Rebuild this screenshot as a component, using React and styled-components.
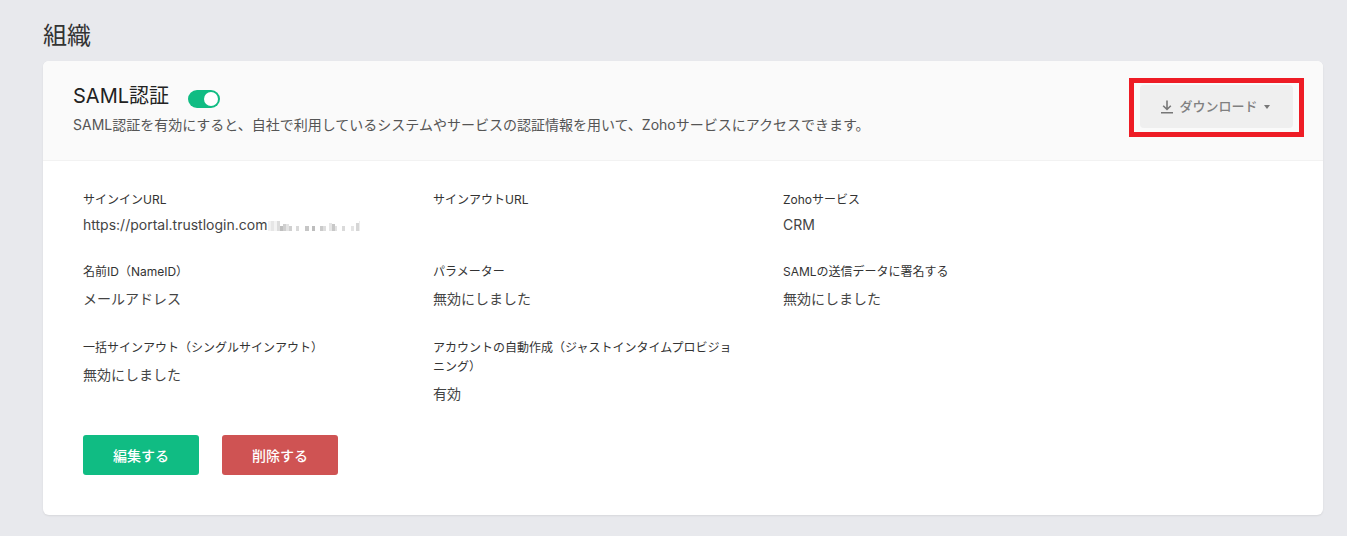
import React from 'react';
import styled, { createGlobalStyle } from 'styled-components';

const Global = createGlobalStyle`
html,body{
    margin:0;
    padding:0;
    background:#e8e9ed;
    font-family:Inter,"Noto Sans CJK JP",sans-serif;
    color:#333;
}
`;
const Page = styled.div`
padding:19px 24px 20px 43px;
height:536px;
box-sizing:border-box;
overflow:hidden;
`;
const Title = styled.h1`
margin:0 0 8px;
font-size:24px;
font-weight:400;
line-height:34px;
color:#333;
`;
const Card = styled.div`
background:#fff;
border-radius:6px;
box-shadow:0 1px 2px rgba(0,0,0,.08);
height:454px;
overflow:hidden;
`;
const Header = styled.div`
position:relative;
height:100px;
box-sizing:border-box;
background:#fafafa;
border-bottom:1px solid #f2f2f2;
padding:21px 30px 0;
display:flex;
justify-content:space-between;
`;
const HeadRow = styled.div`
display:flex;
align-items:center;
height:28px;
`;
const SamlTitle = styled.span`
font-size:20px;
line-height:28px;
color:#222;
`;
const Toggle = styled.span`
display:block;
width:32px;
height:18px;
margin:6px 0 0 19px;
border-radius:9px;
background:#10bc83;
position:relative;
&::after{
    content:'';
    position:absolute;
    top:2px;
    right:2px;
    width:14px;
    height:14px;
    border-radius:50%;
    background:#fff;
}
`;
const Desc = styled.p`
margin:5px 0 0;
font-size:14px;
line-height:20px;
color:#555;
`;
const Download = styled.button`
width:153px;
height:43px;
margin:3px 0 0;
border:0;
border-radius:4px;
background:#efefef;
color:#808080;
font:inherit;
font-size:13px;
font-weight:500;
display:flex;
justify-content:center;
align-items:center;
gap:5px;
padding:0 3px 2px 0;
`;
const Caret = styled.span`
width:0;
height:0;
border-left:3.5px solid transparent;
border-right:3.5px solid transparent;
border-top:4px solid #777;
margin:2px 0 0 1px;
`;
const RedFrame = styled.div`
position:absolute;
top:17px;
right:19px;
width:175px;
height:59px;
border:5px solid #ee1c25;
box-sizing:border-box;
`;
const Body = styled.div`
padding:29px 40px 0;
`;
const Grid = styled.div`
display:grid;
grid-template-columns:repeat(3,350px);
`;
const Field = styled.div`
min-height:${p => p.$h}px;
padding-right:46px;
`;
const Label = styled.div`
font-size:12px;
line-height:19px;
color:#333;
`;
const Value = styled.div`
margin-top:${p => p.$gap}px;
font-size:14px;
line-height:20px;
color:#444;
display:flex;
align-items:center;
min-height:20px;
`;
const Actions = styled.div`
display:flex;
gap:23px;
margin-top:11px;
`;
const Btn = styled.button`
width:116px;
height:40px;
border:0;
border-radius:3px;
background:${p => p.$bg};
color:#fff;
font:inherit;
font-size:14px;
font-weight:500;
padding:0;
`;

// mosaic over the hidden part of the url: [x, y, w, h, colour]
const blurBlocks = [
    [0, 0, 3, 10, '#f1f1f1'], [3, 0, 3, 10, '#e6e6e6'], [6, 0, 3, 10, '#f3f3f3'],
    [9, 0, 3, 10, '#dcdcdc'], [12, 5, 3, 5, '#bfbfbf'], [15, 3, 3, 7, '#cfcfcf'],
    [18, 3, 3, 7, '#e4e4e4'], [21, 5, 3, 5, '#d0d0d0'], [28, 5, 3, 5, '#d9d9d9'],
    [37, 5, 4, 5, '#c6c6c6'], [44, 5, 3, 5, '#bdbdbd'], [52, 5, 3, 5, '#cbcbcb'],
    [55, 5, 3, 5, '#dedede'], [61, 2, 3, 8, '#e6e6e6'], [64, 3, 3, 7, '#c8c8c8'],
    [67, 5, 2, 5, '#e2e2e2'], [74, 5, 3, 5, '#dadada'], [83, 5, 3, 5, '#e4e4e4'],
    [88, 2, 3, 8, '#d6d6d6'], [91, 0, 1, 10, '#ececec'],
];

const BlurredPath = () => (
    <svg width="92" height="10" style={{ marginLeft: 1, marginTop: 1 }}>
        {blurBlocks.map(([x, y, w, h, c]) => <rect key={x} x={x} y={y} width={w} height={h} fill={c} />)}
    </svg>
);

const DownloadIcon = () => (
    <svg width="14" height="15" viewBox="0 0 14 15" fill="none" stroke="#777" strokeWidth="1.6" style={{ marginTop: 2 }}>
        <path d="M7 1.5v8.5M3.2 6.8L7 10.5L10.8 6.8M1 13.7h12" />
    </svg>
);

const fields = [
    { label: 'サインインURL', value: <>https://portal.trustlogin.com<BlurredPath /></>, h: 72, gap: 6 },
    { label: 'サインアウトURL', value: '', h: 72, gap: 6 },
    { label: 'Zohoサービス', value: 'CRM', h: 72, gap: 6 },
    { label: '名前ID（NameID）', value: 'メールアドレス', h: 76, gap: 8 },
    { label: 'パラメーター', value: '無効にしました', h: 76, gap: 8 },
    { label: 'SAMLの送信データに署名する', value: '無効にしました', h: 76, gap: 8 },
    { label: '一括サインアウト（シングルサインアウト）', value: '無効にしました', h: 86, gap: 8 },
    { label: 'アカウントの自動作成（ジャストインタイムプロビジョニング）', value: '有効', h: 86, gap: 8 },
];

export default function App() {
    return (
        <Page>
            <Global />
            <Title>組織</Title>
            <Card>
                <Header>
                    <div>
                        <HeadRow>
                            <SamlTitle>SAML認証</SamlTitle>
                            <Toggle />
                        </HeadRow>
                        <Desc>SAML認証を有効にすると、自社で利用しているシステムやサービスの認証情報を用いて、Zohoサービスにアクセスできます。</Desc>
                    </div>
                    <Download>
                        <DownloadIcon />
                        ダウンロード
                        <Caret />
                    </Download>
                    <RedFrame />
                </Header>
                <Body>
                    <Grid>
                        {fields.map(f => (
                            <Field key={f.label} $h={f.h}>
                                <Label>{f.label}</Label>
                                <Value $gap={f.gap}>{f.value}</Value>
                            </Field>
                        ))}
                    </Grid>
                    <Actions>
                        <Btn $bg="#10bc83">編集する</Btn>
                        <Btn $bg="#cf5353">削除する</Btn>
                    </Actions>
                </Body>
            </Card>
        </Page>
    );
}
